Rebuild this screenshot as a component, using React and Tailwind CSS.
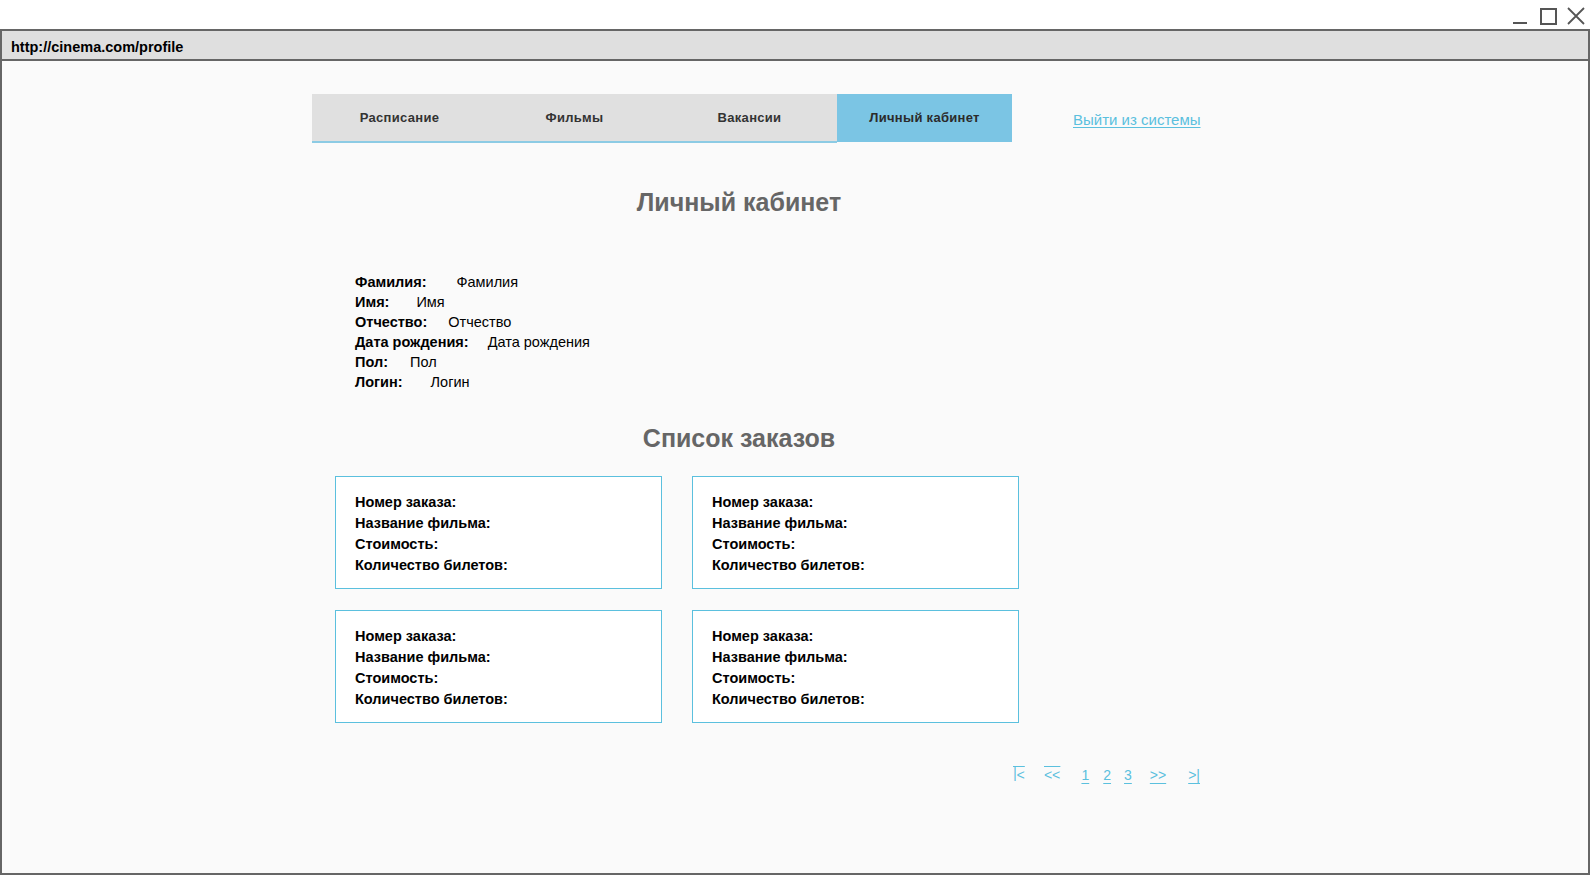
import React from "react"

const tabs = ["Расписание", "Фильмы", "Вакансии"]

const profile = [
  { label: "Фамилия:", value: "Фамилия", gap: "ml-[30px]" },
  { label: "Имя:", value: "Имя", gap: "ml-[27px]" },
  { label: "Отчество:", value: "Отчество", gap: "ml-[21px]" },
  { label: "Дата рождения:", value: "Дата рождения", gap: "ml-[19px]" },
  { label: "Пол:", value: "Пол", gap: "ml-[22px]" },
  { label: "Логин:", value: "Логин", gap: "ml-[28px]" },
]

const orderFields = ["Номер заказа:", "Название фильма:", "Стоимость:", "Количество билетов:"]

function WindowControls() {
  return (
    <div className="flex items-start gap-0 pr-[5px] pt-[7px]">
      <svg width="16" height="18" viewBox="0 0 16 18" className="mr-[12px]">
        <line x1="1" y1="16" x2="15" y2="16" stroke="#555" strokeWidth="2" />
      </svg>
      <svg width="17" height="17" viewBox="0 0 17 17" className="mr-[10px] mt-[1px]">
        <rect x="1" y="1" width="15" height="15" fill="none" stroke="#555" strokeWidth="2" />
      </svg>
      <svg width="18" height="18" viewBox="0 0 18 18">
        <path d="M1 1 L17 17 M17 1 L1 17" stroke="#555" strokeWidth="1.8" />
      </svg>
    </div>
  )
}

function OrderCard() {
  return (
    <div className="h-[113px] border border-[#5bc0de] bg-white pl-[19px] pt-[15px]">
      {orderFields.map((f) => (
        <div key={f} className="text-[14.5px] leading-[21px] font-bold text-black">
          {f}
        </div>
      ))}
    </div>
  )
}

function Pagination() {
  const link = "text-[14px] leading-[20px] text-[#5bc0de] underline underline-offset-[3px]"
  return (
    <div className="flex justify-end pt-[42px]">
      <span className={`${link} inline-block rotate-180`}>&gt;|</span>
      <span className={`${link} ml-[19px] inline-block rotate-180`}>&gt;&gt;</span>
      <span className={`${link} ml-[21px]`}>1</span>
      <span className={`${link} ml-[14px]`}>2</span>
      <span className={`${link} ml-[13px]`}>3</span>
      <span className={`${link} ml-[18px]`}>&gt;&gt;</span>
      <span className={`${link} ml-[22px]`}>&gt;|</span>
    </div>
  )
}

export default function App() {
  return (
    <div className="w-[1590px] h-[875px] flex flex-col bg-white font-['Liberation_Sans',Arial,sans-serif]">
      <div className="h-[29px] flex justify-end">
        <WindowControls />
      </div>
      <div className="flex-1 flex flex-col border-2 border-[#666]">
        <div className="h-[30px] bg-[#dfdfdf] border-b-2 border-[#666] flex items-center pl-[9px] pt-[6px]">
          <span className="text-[14.5px] font-bold text-black">http://cinema.com/profile</span>
        </div>
        <div className="flex-1 bg-[#fafafa] pt-[33px] pl-[310px]">
          <div className="w-[888px]">
            <div className="flex items-center">
              <div className="flex h-[49px]">
                {tabs.map((t) => (
                  <div
                    key={t}
                    className="w-[175px] bg-[#e0e0e0] border-b-2 border-[#8ccbe4] flex items-center justify-center text-[13px] font-bold tracking-[0.3px] text-[#333]"
                  >
                    {t}
                  </div>
                ))}
                <div className="w-[175px] h-[48px] bg-[#7bc5e4] flex items-center justify-center text-[13px] font-bold tracking-[0.3px] text-[#2b2b2b]">
                  Личный кабинет
                </div>
              </div>
              <a className="ml-[61px] mt-[3px] whitespace-nowrap text-[15px] text-[#5bc0de] underline underline-offset-[2px]">
                Выйти из системы
              </a>
            </div>

            <h1 className="pr-[34px] pt-[45px] text-center text-[25px] leading-[29px] font-bold text-[#666]">
              Личный кабинет
            </h1>

            <div className="pl-[43px] pt-[55px]">
              {profile.map((p) => (
                <div key={p.label} className="flex text-[14.5px] leading-[20px] text-black">
                  <span className="font-bold">{p.label}</span>
                  <span className={p.gap}>{p.value}</span>
                </div>
              ))}
            </div>

            <h2 className="pr-[34px] pt-[32px] text-center text-[25px] leading-[29px] font-bold text-[#666]">
              Список заказов
            </h2>

            <div className="ml-[23px] mt-[23px] grid grid-cols-[327px_327px] gap-x-[30px] gap-y-[21px]">
              <OrderCard />
              <OrderCard />
              <OrderCard />
              <OrderCard />
            </div>

            <Pagination />
          </div>
        </div>
      </div>
    </div>
  )
}
